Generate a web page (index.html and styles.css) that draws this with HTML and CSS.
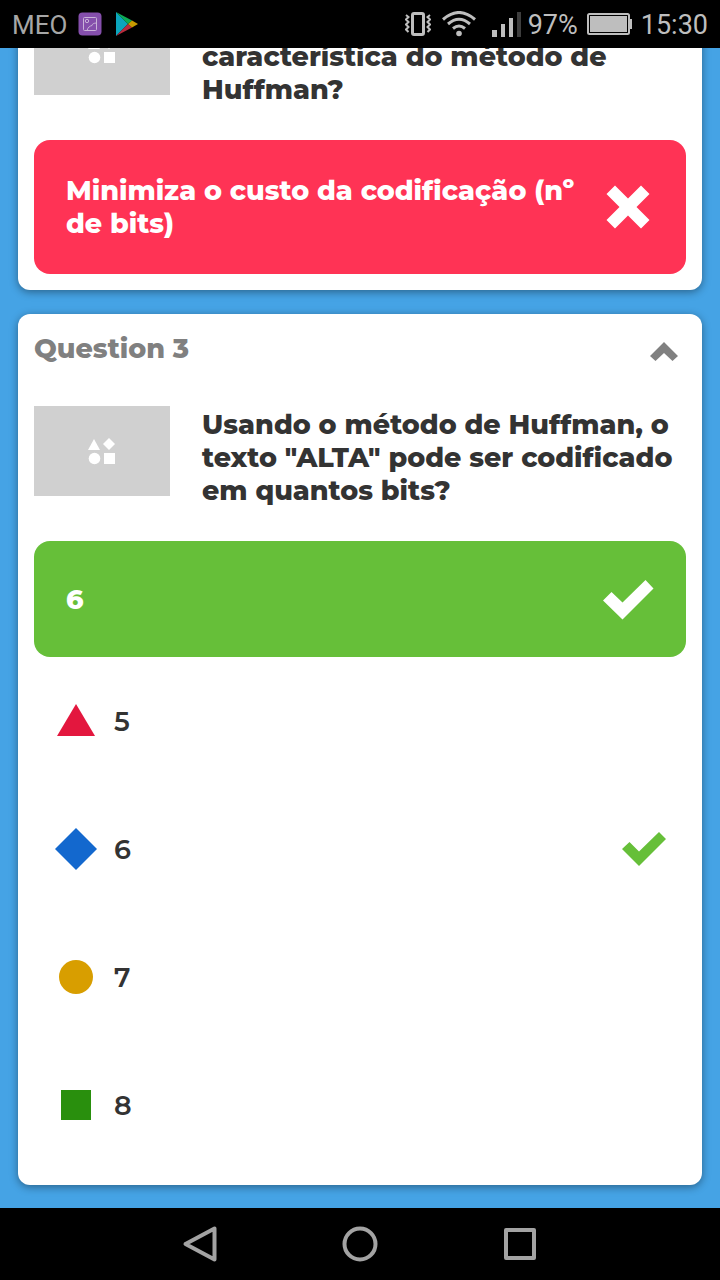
FILE: index.html
```html
<!DOCTYPE html>
<html lang="pt">
<head>
<meta charset="utf-8">
<meta name="viewport" content="width=device-width, initial-scale=1">
<title>Quiz</title>
<link rel="stylesheet" href="styles.css">
</head>
<body>
<header class="status">
  <span class="carrier">MEO</span>
  <svg class="gallery" width="24" height="24" viewBox="0 0 24 24"><rect x=".5" y=".5" width="23" height="23" rx="4" fill="#854fac"/><g fill="none" stroke="#c9b3d8"><rect x="5.500" y="5.500" width="13" height="13" rx="1"/><circle cx="9" cy="9" r="1.700"/><path d="M9 18.500C10 15 12 14 14 13.500C14 12 16 11 18.500 11"/></g></svg>
  <svg class="play" width="22" height="24" viewBox="0 0 22 24"><path d="M0 0L12 12L0 24Z" fill="#0ba5bd"/><path d="M0 0L16 8.500L12 12Z" fill="#0dab55"/><path d="M0 24L16 15.500L12 12Z" fill="#b92b3c"/><path d="M16 8.500L22 12L16 15.500L12 12Z" fill="#c79a00"/></svg>
  <div class="indicators">
    <svg class="vibrate" width="26" height="24" viewBox="0 0 26 24"><rect x="7.500" y="1.500" width="11" height="21" rx="1.500" fill="none" stroke="#bebebe" stroke-width="3"/><path d="M1 3L3.500 5L1 7.500L3.500 10L1 12.500L3.500 15L1 17.500L3.500 20M25 3L22.500 5L25 7.500L22.500 10L25 12.500L22.500 15L25 17.500L22.500 20" fill="none" stroke="#bebebe" stroke-width="2"/></svg>
    <svg class="wifi" width="34" height="26" viewBox="0 0 34 26"><g fill="none" stroke="#bebebe" stroke-width="3"><path d="M1 8.500Q17-5.500 33 8.500"/><path d="M6 13Q17 3.500 28 13"/><path d="M11 17.500Q17 12.500 23 17.500"/></g><circle cx="17" cy="22.500" r="2.800" fill="#bebebe"/></svg>
    <svg class="signal" width="29" height="25" viewBox="0 0 29 25"><path d="M0 18h5v7H0zM9 12h4v13H9zM17 6h4v19h-4z" fill="#bebebe"/><path d="M25 0h4v25h-4z" fill="#3e3e3e"/></svg>
    <span class="percent">97%</span>
    <svg class="battery" width="45" height="22" viewBox="0 0 45 22"><rect x="1" y="1" width="41" height="20" rx="1.500" fill="none" stroke="#bebebe" stroke-width="2"/><path d="M3 3h37v16H3zM43 6h2v10h-2z" fill="#bebebe"/></svg>
    <time>15:30</time>
  </div>
</header>

<main class="questions">
  <section class="card">
    <div class="prompt">
      <svg class="thumb" viewBox="0 0 136 90"><g fill="#fff"><path d="M60 33L66 44H54Z"/><path d="M75 32L81 38L75 44L69 38Z"/><circle cx="60.500" cy="52.500" r="5.800"/><path d="M70 47h11v11H70z"/></g></svg>
      <p class="text text-end">característica do método de<br>Huffman?</p>
    </div>
    <div class="result wrong">
      <span>Minimiza o custo da codificação (nº<br>de bits)</span>
      <svg class="mark" width="52" height="52" viewBox="0 0 52 52"><path d="M13 4.500L26 17.500L39 4.500L47.500 13L34.500 26L47.500 39L39 47.500L26 34.500L13 47.500L4.500 39L17.500 26L4.500 13Z" fill="#fff"/></svg>
    </div>
  </section>

  <section class="card">
    <div class="head">
      <h2>Question 3</h2>
      <button class="collapse" type="button" aria-label="Collapse"><svg width="28" height="19" viewBox="0 0 28 19"><path d="M14 0L28 14L22.500 19L14 11L5.500 19L0 14Z" fill="#808080"/></svg></button>
    </div>
    <div class="prompt">
      <svg class="thumb" viewBox="0 0 136 90"><g fill="#fff"><path d="M60 33L66 44H54Z"/><path d="M75 32L81 38L75 44L69 38Z"/><circle cx="60.500" cy="52.500" r="5.800"/><path d="M70 47h11v11H70z"/></g></svg>
      <p class="text">Usando o método de Huffman, o<br>texto "ALTA" pode ser codificado<br>em quantos bits?</p>
    </div>
    <div class="result right">
      <span>6</span>
      <svg class="mark" width="52" height="42" viewBox="0 0 52 42"><path d="M9.500 14L20.500 24.500L43.500 2L51.500 10.500L20.500 41.500L1 22.500Z" fill="#fff"/></svg>
    </div>
    <ul class="options">
      <li><svg class="shape" width="44" height="44" viewBox="0 0 44 44"><path d="M22 5L41 37H3Z" fill="#e3173e"/></svg><span>5</span></li>
      <li><svg class="shape" width="44" height="44" viewBox="0 0 44 44"><path d="M22 1L43 22L22 43L1 22Z" fill="#1368ce"/></svg><span>6</span><svg class="tick" width="44" height="34" viewBox="0 0 44 34"><path d="M7.500 10L17 19.500L37 0L44 7L17 34L0 17Z" fill="#66bf39"/></svg></li>
      <li><svg class="shape" width="44" height="44" viewBox="0 0 44 44"><circle cx="22" cy="22" r="17" fill="#d89e00"/></svg><span>7</span></li>
      <li><svg class="shape" width="44" height="44" viewBox="0 0 44 44"><path d="M7 7h30v30H7z" fill="#298f0d"/></svg><span>8</span></li>
    </ul>
  </section>
</main>

<nav class="keys">
  <button type="button" aria-label="Back"><svg width="40" height="40" viewBox="0 0 40 40"><path d="M34.500 4.500V35.500L5.500 20Z"/></svg></button>
  <button type="button" aria-label="Home"><svg width="40" height="40" viewBox="0 0 40 40"><circle cx="20" cy="20" r="15.500"/></svg></button>
  <button type="button" aria-label="Recents"><svg width="40" height="40" viewBox="0 0 40 40"><rect x="6" y="6" width="28" height="28"/></svg></button>
</nav>
</body>
</html>
```
FILE: styles.css
```css
* { box-sizing: border-box; }

body {
  margin: 0;
  height: 100vh;
  display: flex;
  flex-direction: column;
  background: #45a3e5;
  color: #333;
  font-family: Montserrat, Inter, "Open Sans", sans-serif;
  font-size: 27px;
  line-height: 33px;
}

svg { display: block; flex: none; }
p, h2, ul { margin: 0; padding: 0; }
button { padding: 0; border: 0; background: none; }

.status {
  flex: none;
  height: 48px;
  padding: 2px 12px 0;
  display: flex;
  align-items: center;
  background: #000;
  color: #bebebe;
  font-family: Roboto, sans-serif;
  font-weight: 400;
}
.status svg { margin-bottom: 2px; }
.status .carrier { color: #a6a6a6; font-size: 26px; }
.status .gallery { margin-left: 11px; }
.status .play { margin-left: 14px; }
.indicators { margin-left: auto; display: flex; align-items: center; }
.status .wifi { margin-left: 11px; }
.status .signal { margin-left: 16px; }
.percent { margin-left: 7px; }
.status .battery { margin-left: 9px; margin-right: 9px; }

.questions {
  flex: 1;
  min-height: 0;
  overflow: hidden;
  display: flex;
  flex-direction: column;
  justify-content: flex-end;
  gap: 24px;
  padding: 0 18px 23px;
}

.card {
  flex: none;
  padding: 16px;
  border-radius: 12px;
  background: #fff;
  box-shadow: 0 2px 8px rgba(0, 0, 0, 0.4);
}

.head {
  display: flex;
  justify-content: space-between;
  align-items: flex-end;
  height: 35px;
  margin-bottom: 41px;
  padding-right: 8px;
}
.head h2 { font-size: 27px; font-weight: 800; color: #808080; }
.collapse { padding-bottom: 4px; }

.prompt { display: flex; align-items: flex-start; gap: 32px; margin-bottom: 34px; min-height: 101px; }
.thumb { width: 136px; height: 90px; background: #d0d0d0; }
.text { padding-top: 2px; font-weight: 800; white-space: nowrap; }
.text-end { align-self: flex-end; }

.result {
  display: flex;
  align-items: center;
  justify-content: space-between;
  min-height: 116px;
  padding: 34px 32px;
  border-radius: 16px;
  color: #fff;
  font-weight: 800;
  white-space: nowrap;
}
.wrong { background: #ff3355; }
.right { background: #66bf39; }

.options { list-style: none; }
.options li {
  display: flex;
  align-items: center;
  height: 128px;
  padding: 0 20px;
  font-weight: 600;
}
.shape { margin-right: 16px; }
.tick { margin-left: auto; }

.keys {
  flex: none;
  height: 72px;
  display: flex;
  justify-content: center;
  align-items: center;
  gap: 120px;
  background: #000;
}
.keys svg { fill: none; stroke: #a3a3a3; stroke-width: 4; stroke-linejoin: round; }
```
